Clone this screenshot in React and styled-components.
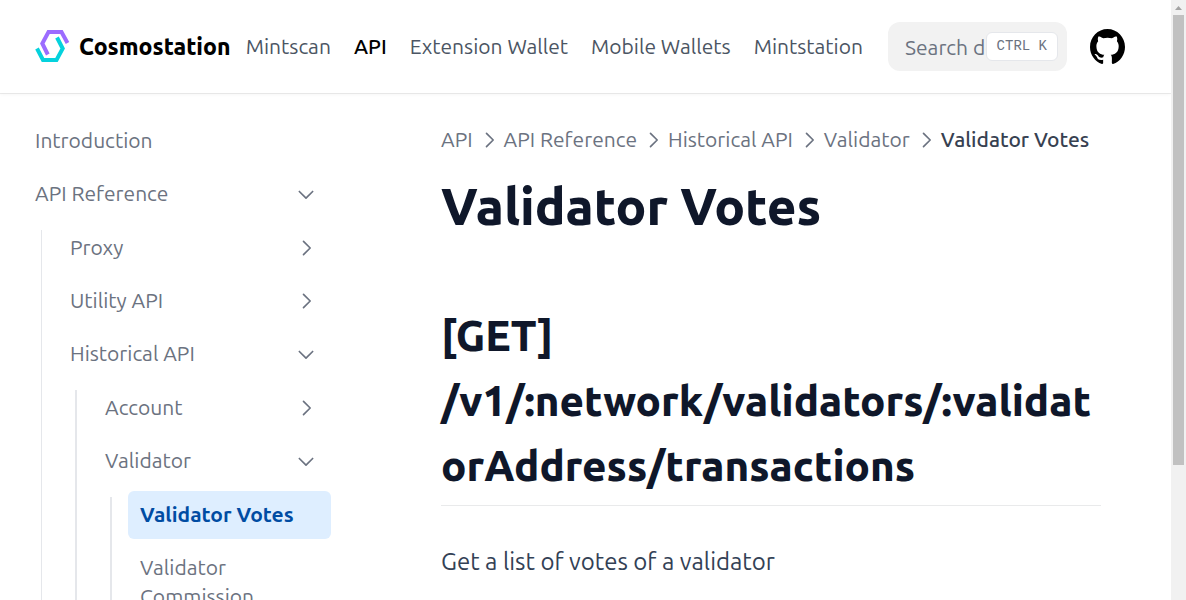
import React, { useState } from "react";
import styled, { createGlobalStyle, css } from "styled-components";

const GlobalStyle = createGlobalStyle`
  *, *::before, *::after { box-sizing: border-box; }
  body {
    margin: 0;
    overflow: hidden;
    background: #fff;
    color: #334155;
    font-family: Ubuntu, "Noto Sans", "Open Sans", sans-serif;
    font-size: 21px;
    line-height: 29px;
  }
  a { color: inherit; text-decoration: none; }
  button, input { font: inherit; }
`;

const Viewport = styled.div`
  display: grid;
  grid-template-columns: minmax(0, 1fr) 15px;
  height: 100vh;
  overflow: hidden;
`;

const Page = styled.div`
  display: flex;
  flex-direction: column;
  min-width: 0;
  min-height: 0;
`;

const ScrollTrack = styled.div`
  display: flex;
  flex-direction: column;
  align-items: center;
  background: #f1f1f1;
`;

const ScrollArrow = styled.svg`
  display: block;
  flex: none;
  width: 15px;
  height: 15px;
  fill: #a3a3a3;
`;

const ScrollThumb = styled.div`
  flex: none;
  width: 11px;
  height: 75%;
  background: #c1c1c1;
`;

const Header = styled.header`
  display: flex;
  flex: none;
  align-items: center;
  height: 93px;
  padding: 0 46px 0 35px;
  box-shadow: 0 1px 0 rgba(0, 0, 0, 0.07), 0 2px 3px rgba(0, 0, 0, 0.03);
`;

const Brand = styled.a`
  display: flex;
  align-items: center;
  gap: 9px;
  margin-right: auto;
  color: #000;
  font-size: 23px;
  font-weight: 800;
  line-height: 32px;
`;

const Logo = styled.svg`
  width: 35px;
  height: 34px;
  fill: none;
  stroke-width: 4;
`;

const TopNav = styled.nav`
  display: flex;
  gap: 23px;
  margin-right: 25px;
  white-space: nowrap;
`;

const TopLink = styled.a`
  color: ${(p) => (p.$active ? "#000" : "#4b5563")};
  font-weight: ${(p) => (p.$active ? 500 : 400)};
`;

const Search = styled.label`
  position: relative;
  flex: none;
  width: 179px;
  margin-right: 23px;
`;

const SearchInput = styled.input`
  display: block;
  width: 100%;
  height: 49px;
  padding: 0 17px;
  border: 0;
  border-radius: 12px;
  background: #f2f2f2;
  color: #6b7280;
  outline: none;
  &::placeholder { color: #6b7280; opacity: 1; }
`;

const Shortcut = styled.kbd`
  position: absolute;
  top: 10px;
  right: 9px;
  height: 29px;
  padding: 0 10px;
  border: 1px solid #e5e7eb;
  border-radius: 6px;
  background: #fff;
  color: #6b7280;
  font-family: "Liberation Mono", monospace;
  font-size: 14px;
  line-height: 26px;
`;

const IconLink = styled.a`
  display: block;
  flex: none;
  color: #000;
  svg { display: block; width: 35px; height: 35px; }
`;

const Body = styled.div`
  display: grid;
  grid-template-columns: 371px minmax(0, 1fr);
  flex: 1;
  min-height: 0;
  overflow: hidden;
`;

const Sidebar = styled.aside`
  min-height: 0;
  overflow: hidden;
  padding: 24px 40px 0 23px;
`;

const List = styled.ul`
  display: flex;
  flex: 1;
  flex-direction: column;
  gap: 5px;
  min-width: 0;
  margin: 0;
  padding: 0;
  list-style: none;
`;

const rowStyle = css`
  display: flex;
  align-items: center;
  justify-content: space-between;
  width: 100%;
  padding: 9px 15px 10px 12px;
  border: 0;
  border-radius: 6px;
  background: transparent;
  color: #6b7280;
  text-align: left;
  cursor: pointer;
`;

const RowButton = styled.button`
  ${rowStyle}
`;

const RowLink = styled.a`
  ${rowStyle}
  ${(p) => p.$active && css`
    background: #deeeff;
    color: #004ca3;
    font-weight: 700;
  `}
`;

const Branch = styled.div`
  display: flex;
  gap: 16px;
  margin-left: 17px;
  padding-top: 6px;
`;

const Guide = styled.span`
  width: 2px;
  margin-top: 6px;
  border-right: ${(p) => (p.$thin ? 1 : 2)}px solid #e5e7eb;
`;

const Chevron = styled.svg`
  flex: none;
  width: 20px;
  height: 20px;
  fill: none;
  stroke: currentColor;
  stroke-width: 2;
  stroke-linecap: round;
  stroke-linejoin: round;
  transform: ${(p) => (p.$open ? "rotate(90deg)" : "none")};
`;

const Article = styled.main`
  min-width: 0;
  padding: 32px 70px 0;
`;

const Crumbs = styled.ol`
  display: flex;
  gap: 5px;
  margin: 0;
  padding: 0;
  color: #6b7280;
  list-style: none;
  white-space: nowrap;
`;

const Crumb = styled.li`
  display: flex;
  align-items: center;
  gap: 6px;
  ${(p) => p.$current && css`
    color: #374151;
    font-weight: 500;
  `}
`;

const Title = styled.h1`
  margin: 19px 0 0;
  color: #0f172a;
  font-size: 51px;
  font-weight: 800;
  line-height: 66px;
`;

const Endpoint = styled.h2`
  margin: 64px 0 0;
  padding-bottom: 7px;
  border-bottom: 1px solid #e9eaeb;
  color: #0f172a;
  font-size: 42px;
  font-weight: 800;
  line-height: 65px;
  overflow-wrap: anywhere;
`;

const Lead = styled.p`
  margin: 36px 0 0;
  font-size: 24px;
  line-height: 40px;
`;

const topLinks = ["Mintscan", "API", "Extension Wallet", "Mobile Wallets", "Mintstation"];
const crumbs = ["API", "API Reference", "Historical API", "Validator", "Validator Votes"];

const tree = [
  { label: "Introduction" },
  {
    label: "API Reference",
    open: true,
    children: [
      { label: "Proxy", children: [] },
      { label: "Utility API", children: [] },
      {
        label: "Historical API",
        open: true,
        children: [
          { label: "Account", children: [] },
          {
            label: "Validator",
            open: true,
            children: [
              { label: "Validator Votes", active: true },
              { label: "Validator Commission" },
            ],
          },
        ],
      },
    ],
  },
];

function Arrow({ open }) {
  return (
    <Chevron viewBox="0 0 24 24" $open={open} aria-hidden="true">
      <path d="M9 4l8 8-8 8" />
    </Chevron>
  );
}

function TreeItem({ item, depth }) {
  const [open, setOpen] = useState(Boolean(item.open));
  if (!item.children) {
    return (
      <li>
        <RowLink href="#" $active={item.active} aria-current={item.active ? "page" : undefined}>
          {item.label}
        </RowLink>
      </li>
    );
  }
  return (
    <li>
      <RowButton type="button" aria-expanded={open} onClick={() => setOpen(!open)}>
        {item.label}
        <Arrow open={open} />
      </RowButton>
      {open && item.children.length > 0 && (
        <Branch>
          <Guide $thin={depth === 0} />
          <List>
            {item.children.map((child) => (
              <TreeItem key={child.label} item={child} depth={depth + 1} />
            ))}
          </List>
        </Branch>
      )}
    </li>
  );
}

export default function App() {
  return (
    <>
      <GlobalStyle />
      <Viewport>
        <Page>
          <Header>
            <Brand href="#">
              <Logo viewBox="35 30 35 34" aria-hidden="true">
                <path stroke="#9c6cff" d="M67.5 43 61.5 32H48.5L42.3 43.5 47.8 54.5" />
                <path stroke="#05d2dd" d="M37 48.5 43 60H56.5L62.7 48.5 57 37.5" />
              </Logo>
              Cosmostation
            </Brand>
            <TopNav aria-label="Main">
              {topLinks.map((label) => (
                <TopLink key={label} href="#" $active={label === "API"}>{label}</TopLink>
              ))}
            </TopNav>
            <Search>
              <SearchInput type="search" aria-label="Search documentation" placeholder="Search documentation…" />
              <Shortcut>CTRL K</Shortcut>
            </Search>
            <IconLink href="#" aria-label="GitHub">
              <svg viewBox="3 3 18 18" fill="currentColor" aria-hidden="true">
                <path d="M12 3C7.0275 3 3 7.12937 3 12.2276C3 16.3109 5.57625 19.7597 9.15374 20.9824C9.60374 21.0631 9.77249 20.7863 9.77249 20.5441C9.77249 20.3249 9.76125 19.5982 9.76125 18.8254C7.5 19.2522 6.915 18.2602 6.735 17.7412C6.63375 17.4759 6.19499 16.6569 5.8125 16.4378C5.4975 16.2647 5.0475 15.838 5.80124 15.8264C6.51 15.8149 7.01625 16.4954 7.18499 16.7723C7.99499 18.1679 9.28875 17.7758 9.80625 17.5335C9.885 16.9337 10.1212 16.53 10.38 16.2993C8.3775 16.0687 6.285 15.2728 6.285 11.7432C6.285 10.7397 6.63375 9.9092 7.20749 9.26326C7.1175 9.03257 6.8025 8.08674 7.2975 6.81794C7.2975 6.81794 8.05125 6.57571 9.77249 7.76377C10.4925 7.55615 11.2575 7.45234 12.0225 7.45234C12.7875 7.45234 13.5525 7.55615 14.2725 7.76377C15.9937 6.56418 16.7475 6.81794 16.7475 6.81794C17.2424 8.08674 16.9275 9.03257 16.8375 9.26326C17.4113 9.9092 17.76 10.7281 17.76 11.7432C17.76 15.2843 15.6563 16.0687 13.6537 16.2993C13.98 16.5877 14.2613 17.1414 14.2613 18.0065C14.2613 19.2407 14.25 20.2326 14.25 20.5441C14.25 20.7863 14.4188 21.0746 14.8688 20.9824C16.6554 20.364 18.2079 19.1866 19.3078 17.6162C20.4077 16.0457 20.9995 14.1611 21 12.2276C21 7.12937 16.9725 3 12 3Z" />
              </svg>
            </IconLink>
          </Header>
          <Body>
            <Sidebar>
              <nav aria-label="Documentation">
                <List>
                  {tree.map((item) => (
                    <TreeItem key={item.label} item={item} depth={0} />
                  ))}
                </List>
              </nav>
            </Sidebar>
            <Article>
              <Crumbs>
                {crumbs.map((label, i) => {
                  const current = i === crumbs.length - 1;
                  return (
                    <Crumb key={label} $current={current}>
                      {current ? <span aria-current="page">{label}</span> : <a href="#">{label}</a>}
                      {!current && <Arrow />}
                    </Crumb>
                  );
                })}
              </Crumbs>
              <Title>Validator Votes</Title>
              <Endpoint>[GET] /v1/:network/validators/:validatorAddress/transactions</Endpoint>
              <Lead>Get a list of votes of a validator</Lead>
            </Article>
          </Body>
        </Page>
        <ScrollTrack aria-hidden="true">
          <ScrollArrow viewBox="0 0 15 15">
            <path d="M4 10h7L7.5 6z" />
          </ScrollArrow>
          <ScrollThumb />
        </ScrollTrack>
      </Viewport>
    </>
  );
}
